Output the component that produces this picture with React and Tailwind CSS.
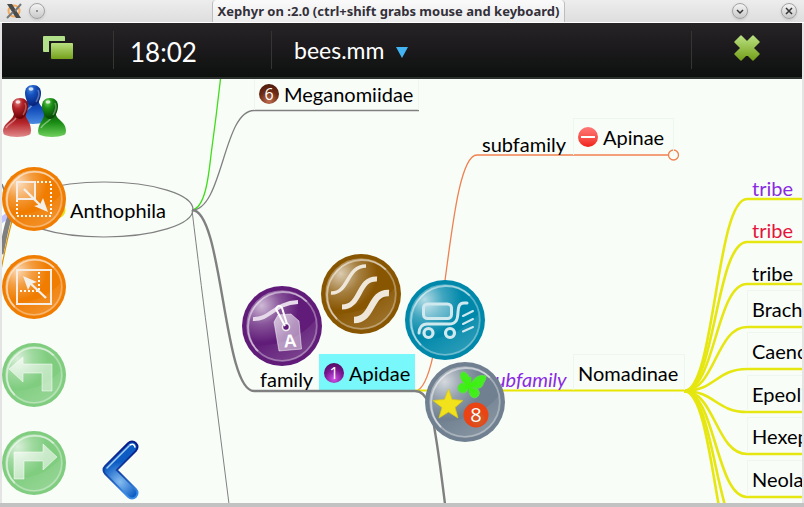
import React from "react";

/* Glossy round badge used by the side bar and the radial menu. */
function Disc({ id, size, color, children }) {
  const c = size / 2;
  return (
    <svg viewBox={`0 0 ${size} ${size}`} className="block size-full" aria-hidden="true">
      <defs>
        <radialGradient id={`${id}-shine`} cx="0.2" cy="0.2" r="0.55">
          <stop offset="0" stopColor="#fff" stopOpacity="0.7" />
          <stop offset="0.5" stopColor="#fff" stopOpacity="0.25" />
          <stop offset="1" stopColor="#fff" stopOpacity="0" />
        </radialGradient>
        <linearGradient id={`${id}-low`} x1="0" y1="0" x2="1" y2="1">
          <stop offset="0.3" stopColor="#fff" stopOpacity="0" />
          <stop offset="1" stopColor="#fff" stopOpacity="0.22" />
        </linearGradient>
        <linearGradient id={`${id}-ink`} x1="0" y1="0" x2="1" y2="1">
          <stop offset="0" stopColor="#fff" />
          <stop offset="1" stopColor="#fff" stopOpacity="0.65" />
        </linearGradient>
      </defs>
      <circle cx={c} cy={c} r={c} fill={color} />
      <circle cx={c} cy={c} r={c * 0.85} fill={`url(#${id}-shine)`} />
      <path
        d={`M${c * 0.3} ${c * 1.5} Q${c * 1.3} ${c * 1.5} ${c * 1.84} ${c * 0.85} A${c * 0.85} ${c * 0.85} 0 0 1 ${c * 0.3} ${c * 1.5}Z`}
        fill={`url(#${id}-low)`}
      />
      <circle cx={c} cy={c} r={c * 0.87} fill="none" stroke="#fff" strokeOpacity="0.35" strokeWidth="1.8" />
      <path
        d={`M${c * 0.4} ${c * 1.63} A${c * 0.87} ${c * 0.87} 0 0 1 ${c * 1.62} ${c * 0.39}`}
        fill="none"
        stroke="#fff"
        strokeOpacity="0.5"
        strokeWidth="1.8"
      />
      {children}
    </svg>
  );
}

function Person({ x, y, lean, id, light, mid, dark }) {
  return (
    <g transform={`translate(${x} ${y})`}>
      <defs>
        <radialGradient id={`${id}-head`} cx="0.35" cy="0.2" r="0.75">
          <stop offset="0" stopColor={light} />
          <stop offset="0.4" stopColor={mid} />
          <stop offset="1" stopColor={dark} />
        </radialGradient>
        <linearGradient id={`${id}-body`} x1="0" y1="0" x2="0" y2="1">
          <stop offset="0" stopColor={dark} />
          <stop offset="0.45" stopColor={mid} />
          <stop offset="1" stopColor={light} />
        </linearGradient>
      </defs>
      <path
        d={`M${lean - 6} 13 H${lean + 6} C${lean + 4} 22 14 22 14 33 Q14 36 12 37 C6 39.500 -6 39.500 -12 37 Q-14 36 -14 33 C-13 23 ${lean - 5} 23 ${lean - 6} 13Z`}
        fill={`url(#${id}-body)`}
      />
      <path d="M-11 30 C-9 25 -4 25 -1 20" fill="none" stroke="#fff" strokeOpacity="0.4" strokeWidth="1.5" />
      <g transform={`translate(${lean} 0)`}>
        <path d="M0 0 C5 0 8 3 8 8 C8 13 5 21 0 21 C-5 21 -8 13 -8 8 C-8 3 -5 0 0 0Z" fill={`url(#${id}-head)`} />
        <ellipse cx="-2" cy="4" rx="2.500" ry="1.800" fill="#fff" fillOpacity="0.75" />
        <path d="M5 5 C7 9 5 14 3 17" fill="none" stroke="#fff" strokeOpacity="0.3" strokeWidth="1.500" />
      </g>
    </g>
  );
}

function PeopleIcon() {
  return (
    <svg viewBox="0 0 64 64" className="block size-full" aria-hidden="true">
      <Person id="blue" x={31} y={6} lean={0} light="#4a8be0" mid="#1550bd" dark="#08257f" />
      <Person id="red" x={15} y={19} lean={3} light="#e08a8a" mid="#b5252a" dark="#6d0408" />
      <Person id="green" x={50} y={19} lean={-2} light="#6fd05c" mid="#1a8d15" dark="#064a06" />
    </svg>
  );
}

function ExpandIcon() {
  return (
    <Disc id="expand" size={64} color="#f07c00">
      <rect x="15" y="15" width="34" height="34" fill="none" stroke="#fff" strokeOpacity="0.95" strokeWidth="2" strokeDasharray="2 2" />
      <rect x="15" y="15" width="18" height="17" fill="#fff" fillOpacity="0.2" stroke="#f6ece2" strokeWidth="2" />
      <path d="M22 22 L40 40" stroke="#f3efe9" strokeWidth="2.4" />
      <path d="M46 45 L32 39 L38 37.500 L41 31Z" fill="#f3efe9" />
    </Disc>
  );
}

function ShrinkIcon() {
  return (
    <Disc id="shrink" size={64} color="#f07c00">
      <rect x="15" y="15" width="34" height="34" fill="none" stroke="#f6ece2" strokeWidth="2" />
      <path d="M37 17 V36 H16" fill="none" stroke="#fff" strokeOpacity="0.95" strokeWidth="2" strokeDasharray="2 2" />
      <path d="M44 43 L27 27" stroke="#f3efe9" strokeWidth="2.4" />
      <path d="M21 21 L35 27 L29 29 L26 35Z" fill="#f3efe9" />
    </Disc>
  );
}

function UndoIcon() {
  return (
    <Disc id="undo" size={64} color="#80cd80">
      <path d="M7 26 L21 14 V21 H50 V48 H40 V30 H21 V39Z" fill="url(#undo-ink)" fillOpacity="0.65" stroke="#fff" strokeOpacity="0.5" strokeWidth="1" />
    </Disc>
  );
}

function RedoIcon() {
  return (
    <Disc id="redo" size={64} color="#80cd80">
      <path d="M55 26 L41 13 V21 H12 V48 H22 V30 H41 V39Z" fill="url(#redo-ink)" fillOpacity="0.7" stroke="#fff" strokeOpacity="0.5" strokeWidth="1" />
    </Disc>
  );
}

function TagIcon() {
  return (
    <Disc id="tag" size={80} color="#601c78">
      <path d="M11 33 C28 34 32 17 56 16" fill="none" stroke="#e6d9ea" strokeWidth="4" />
      <path d="M32 36 L36 29 L49 28 L57 35 L59.500 63 L37 65Z" fill="url(#tag-ink)" fillOpacity="0.65" stroke="#fff" strokeOpacity="0.5" strokeWidth="1" />
      <circle cx="44" cy="41" r="3.500" fill="#601c78" stroke="#eee" strokeWidth="1.600" />
      <path d="M43 40 L34 23 Q37 17 40 22 L45 38" fill="none" stroke="#fff" strokeWidth="2" />
      <text x="48" y="61" fontSize="18" fontWeight="700" textAnchor="middle" fill="#fff" transform="rotate(-4 48 55)" className="font-['Liberation_Sans',sans-serif]">A</text>
    </Disc>
  );
}

function WavesIcon() {
  return (
    <Disc id="waves" size={80} color="#885500">
      <g fill="none" stroke="#eee7da">
        <path d="M10 39 C28 40 25 12 45 12" strokeWidth="3.500" />
        <path d="M21 53 C41 53 36 24 56 25" strokeWidth="5" />
        <path d="M33 66 C53 66 48 38 68 39" strokeWidth="6.500" />
      </g>
    </Disc>
  );
}

function CartIcon() {
  return (
    <Disc id="cart" size={80} color="#0088aa">
      <g fill="none" stroke="#d0e9ef" strokeLinecap="round">
        <rect x="18.500" y="24" width="28" height="14.500" rx="4" strokeWidth="3" fill="url(#cart-ink)" fillOpacity="0.35" />
        <path d="M62 23 H59 C50 23 55 36 51 41 Q49 44 44 44 H22 C17 44 14 48 14 53" strokeWidth="3" />
        <circle cx="23.500" cy="53" r="4.500" strokeWidth="3.200" />
        <circle cx="45" cy="53" r="4.500" strokeWidth="3.200" />
        <path d="M58 36 L68 31 M58 44 L68 39 M58 51.500 L68 47" strokeWidth="2" />
      </g>
    </Disc>
  );
}

function BadgesIcon() {
  return (
    <Disc id="badges" size={80} color="#708090">
      <path d="M23.500 27 L27 37.500 L38 38.500 L30 45.500 L33 56 L23.500 50 L14 56 L17 45.500 L8 38.500 L19.500 37.500Z" fill="#f2e21c" stroke="#dccb10" strokeWidth="0.800" />
      <g fill="#42ef1c" stroke="#62d850" strokeWidth="1">
        <path d="M44 24 C37 21 33 14 37 10 C41 9 46 15 46 23Z" />
        <path d="M46 23 C48 16 54 12 61 14 C61 18 59 20 58 22 C58 26 52 27 48 26Z" />
        <circle cx="38" cy="26" r="5" />
        <circle cx="49.500" cy="31" r="4.800" />
        <path d="M45 15 L45 31" stroke="#3cf010" strokeWidth="2.500" />
        <path d="M40 26 L52 21 M38 17 L49 30" stroke="#3cf010" strokeWidth="3" />
      </g>
      <circle cx="51" cy="53" r="12.500" fill="#ea4414" />
      <circle cx="53" cy="57" r="7" fill="#c86030" fillOpacity="0.500" />
      <text x="51" y="60" fontSize="20" textAnchor="middle" fill="#fff" className="font-['Open_Sans',sans-serif]">8</text>
    </Disc>
  );
}

function ChevronIcon() {
  return (
    <svg viewBox="0 0 40 62" className="block size-full" aria-hidden="true">
      <defs>
        <linearGradient id="chev-edge" x1="0" y1="0" x2="0" y2="1">
          <stop offset="0" stopColor="#0a1a86" />
          <stop offset="0.55" stopColor="#1242a5" />
          <stop offset="1" stopColor="#3a8ae6" />
        </linearGradient>
        <radialGradient id="chev-fill" gradientUnits="userSpaceOnUse" cx="20" cy="43" r="20">
          <stop offset="0" stopColor="#86bdf0" />
          <stop offset="1" stopColor="#0c5cc4" />
        </radialGradient>
      </defs>
      <g fill="none" strokeLinecap="round" strokeLinejoin="round">
        <path d="M32 8 L9 31 L32 54" stroke="url(#chev-edge)" strokeWidth="13" />
        <path d="M32 8 L9 31 L32 54" stroke="url(#chev-fill)" strokeWidth="9" />
        <path d="M29 7 L7 29" stroke="#a9d0f5" strokeWidth="1.500" />
        <path d="M30 6 Q34 4 35 8" stroke="#fff" strokeWidth="1.500" />
      </g>
    </svg>
  );
}

const rows = [199, 242, 284, 327, 369, 412, 454, 497, 540, 582];

function Branches() {
  return (
    <svg viewBox="2 79 800 424" className="absolute top-0 left-0 h-[424px] w-[800px] overflow-visible" fill="none" aria-hidden="true">
      <path d="M0 221 L16 210" stroke="#c3c4ff" strokeWidth="6" />
      <path d="M15 208 C8 202 5 194 2 184" stroke="#808080" strokeWidth="1.500" />
      <path d="M16 209 C8 214 6 230 1 254" stroke="#808080" strokeWidth="5" />
      <path d="M15 211 C10 225 6 245 1 270" stroke="#dc9400" strokeWidth="1.200" />
      <ellipse cx="104" cy="209.500" rx="89" ry="27.500" stroke="#808080" strokeWidth="1.200" />
      <circle cx="57" cy="210" r="8.500" fill="#e8e010" />
      <path d="M192 210 C206 208 209 172 211 155 C214 133 217 110 220.500 79" stroke="#3fdd1a" strokeWidth="1.300" />
      <path d="M192 210 C223 210 223 110.500 254 110.500 H419" stroke="#808080" strokeWidth="1.300" />
      <path d="M192 210 C195 235 203 300 207 330 L229 504" stroke="#808080" strokeWidth="1" />
      <path d="M415 391 C446 391 446 155 477 155 H668" stroke="#f08050" strokeWidth="1.300" />
      <circle cx="673.500" cy="155" r="5" fill="#f8fdf8" stroke="#f08050" strokeWidth="1.300" />
      <path d="M415 390.500 H686" stroke="#e6e600" strokeWidth="2" />
      <path d="M192 210 C223 210 223 391 254 391 H415 C429 391 432 413 435 432 C439 455 442 480 445 504" stroke="#808080" strokeWidth="2.400" />
      {rows.map((y) => (
        <path key={y} d={`M684 391 C715 391 716 ${y} 747 ${y} H804`} stroke="#e6e610" strokeWidth="2.600" />
      ))}
    </svg>
  );
}

function Ball({ className, children }) {
  return (
    <span className={`flex size-5 shrink-0 items-center justify-center rounded-full font-['Open_Sans',sans-serif] text-base leading-5 text-white ${className}`}>
      {children}
    </span>
  );
}

function Node({ className, icon, children }) {
  return (
    <div className={`absolute flex items-center gap-[5px] border pl-1 whitespace-nowrap ${className}`}>
      {icon}
      <span>{children}</span>
    </div>
  );
}

function Label({ className, children }) {
  return <span className={`absolute whitespace-nowrap ${className}`}>{children}</span>;
}

function RoundButton({ label, className, children }) {
  return (
    <button type="button" aria-label={label} className={`rounded-full ${className}`}>
      {children}
    </button>
  );
}

function TitleBar() {
  const knob = "flex size-4 items-center justify-center rounded-full border border-[#a2a2a2] bg-gradient-to-b from-[#f4f4f4] to-[#c9c9c9] shadow-sm";
  return (
    <header className="flex h-[23px] shrink-0 border-b border-white bg-gradient-to-b from-[#ededed] to-[#dedede]">
      <div className="flex w-[212px] shrink-0 items-center gap-[7px] pl-[6px]">
        <svg viewBox="0 0 16 16" className="size-4" aria-hidden="true">
          <circle cx="8" cy="8" r="5.500" fill="none" stroke="#f5a85a" strokeWidth="2" />
          <path d="M1 1 H6 L15 15 H10Z" fill="#4a4a4a" />
          <path d="M15 1 L9 8 M7 9 L1 15" stroke="#777" strokeWidth="2" />
        </svg>
        <button type="button" aria-label="Window menu" className={knob}>
          <span className="size-[2px] rounded-full bg-[#777]" />
        </button>
      </div>
      <h1 className="flex-1 rounded-t-sm border-x border-[#bdbdbd] bg-gradient-to-b from-[#fafafa] to-[#ececec] text-center font-['Noto_Sans',sans-serif] text-[13px] leading-[22px] font-bold whitespace-nowrap text-[#33303a]">
        Xephyr on :2.0 (ctrl+shift grabs mouse and keyboard)
      </h1>
      <div className="flex w-[239px] shrink-0 items-center justify-end gap-[33px] pr-[7px]">
        <button type="button" aria-label="Minimize" className={knob}>
          <svg viewBox="0 0 10 10" className="size-[10px]" fill="none" stroke="#333" strokeWidth="1.500" aria-hidden="true"><path d="M2 4 L5 7 L8 4" /></svg>
        </button>
        <button type="button" aria-label="Close window" className={knob}>
          <svg viewBox="0 0 10 10" className="size-[10px]" fill="none" stroke="#333" strokeWidth="1.500" aria-hidden="true"><path d="M2 2 L8 8 M8 2 L2 8" /></svg>
        </button>
      </div>
    </header>
  );
}

function ToolBar() {
  return (
    <nav className="flex h-14 shrink-0 items-stretch border-b-2 border-[#2c302e] bg-gradient-to-b from-[#272426] via-[#1b191c] to-[#0d110e] text-white">
      <button type="button" aria-label="Task switcher" className="flex w-[111px] items-center justify-center pb-1">
        <svg viewBox="0 0 32 26" className="h-[26px] w-8" aria-hidden="true">
          <defs>
            <linearGradient id="leaf" x1="0" y1="0" x2="0" y2="1">
              <stop offset="0" stopColor="#b9e080" />
              <stop offset="1" stopColor="#74a01a" />
            </linearGradient>
          </defs>
          <rect x="1" y="1" width="22" height="16" rx="1" fill="#b2e08a" />
          <rect x="7" y="6" width="24" height="19" fill="#1c1a1d" />
          <rect x="9" y="8" width="22" height="16" rx="1" fill="url(#leaf)" />
        </svg>
      </button>
      <div className="my-2 w-px bg-[#343634]" />
      <time className="w-[157px] pt-1 pl-4 text-[26px] leading-[50px]">18:02</time>
      <div className="my-2 w-px bg-[#343634]" />
      <button type="button" className="flex flex-1 items-center gap-3 pl-[22px] text-[23px]">
        bees.mm
        <svg viewBox="0 0 12 11" className="mt-1 h-[11px] w-3" aria-hidden="true">
          <path d="M0 0 H12 L6 11Z" fill="#43b4f2" />
        </svg>
      </button>
      <div className="my-2 w-px bg-[#343634]" />
      <button type="button" aria-label="Close" className="flex w-[110px] items-center justify-center pb-1">
        <svg viewBox="0 0 26 26" className="size-[26px]" aria-hidden="true">
          <path d="M7 1 L13 7 L19 1 L25 7 L19 13 L25 19 L19 25 L13 19 L7 25 L1 19 L7 13 L1 7Z" fill="url(#leaf)" stroke="url(#leaf)" strokeWidth="1.500" strokeLinejoin="round" />
        </svg>
      </button>
    </nav>
  );
}

export default function App() {
  return (
    <div className="flex min-h-screen flex-col bg-[#e4e4e4] font-['Lato','Noto_Sans',sans-serif]">
      <TitleBar />
      <div className="mx-[2px] flex flex-1 flex-col">
        <ToolBar />
        <main className="relative flex-1 overflow-hidden bg-[#f8fdf8] text-xl leading-6 text-black">
          <Node className="top-[275px] left-[317px] h-[37px] w-24 border-[#78f8fa] bg-[#78f8fa]" icon={<Ball className="bg-[radial-gradient(circle_at_50%_80%,#d050e8,#7a1590_50%,#40064e)]">1</Ball>}>Apidae</Node>
          <Branches />
          <Label className="top-[119px] left-[68px]">Anthophila</Label>
          <Node className="-top-[3px] left-[252px] h-[34px] w-[165px] border-b-0 border-[#eff5ef]" icon={<Ball className="bg-[radial-gradient(circle_at_50%_85%,#c07050,#6e2b14_50%,#42150a)]">6</Ball>}>Meganomiidae</Node>
          <Label className="top-[53px] left-[480px]">subfamily</Label>
          <Node
            className="top-[39px] left-[571px] h-[37px] w-[101px] border-b-0 border-[#eff5ef]"
            icon={
              <span className="flex size-5 shrink-0 items-center justify-center rounded-full bg-gradient-to-b from-[#f77] to-[#f01c14]">
                <span className="h-[2px] w-[14px] bg-white" />
              </span>
            }
          >
            Apinae
          </Node>
          <Label className="top-[288px] left-[258px]">family</Label>
          <Label className="top-[288px] left-[485px] text-[#8a2be2] italic">subfamily</Label>
          <Node className="top-[275px] left-[571px] h-9 w-[112px] border-b-0 border-[#eff5ef]">Nomadinae</Node>
          <Label className="top-[97px] left-[750px] text-[#8a2be2]">tribe</Label>
          <Label className="top-[139px] left-[750px] text-[#e6143c]">tribe</Label>
          <Label className="top-[182px] left-[750px]">tribe</Label>
          <Node className="top-[211px] left-[745px] h-9 w-24 border-b-0 border-[#eff5ef]">Brach</Node>
          <Node className="top-[253px] left-[745px] h-9 w-24 border-b-0 border-[#eff5ef]">Caeno</Node>
          <Node className="top-[296px] left-[745px] h-9 w-24 border-b-0 border-[#eff5ef]">Epeoli</Node>
          <Node className="top-[338px] left-[745px] h-9 w-24 border-b-0 border-[#eff5ef]">Hexep</Node>
          <Node className="top-[381px] left-[745px] h-9 w-24 border-b-0 border-[#eff5ef]">Neola</Node>

          <aside className="absolute top-0 left-0 flex flex-col gap-6">
            <RoundButton label="People" className="size-16"><PeopleIcon /></RoundButton>
            <RoundButton label="Expand" className="size-16"><ExpandIcon /></RoundButton>
            <RoundButton label="Shrink" className="size-16"><ShrinkIcon /></RoundButton>
            <RoundButton label="Undo" className="size-16"><UndoIcon /></RoundButton>
            <RoundButton label="Redo" className="size-16"><RedoIcon /></RoundButton>
          </aside>
          <button type="button" aria-label="Back" className="absolute top-[360px] left-[98px] h-[62px] w-10"><ChevronIcon /></button>

          <RoundButton label="Edit tag" className="absolute top-[207px] left-[240px] size-20"><TagIcon /></RoundButton>
          <RoundButton label="Line style" className="absolute top-[175px] left-[319px] size-20"><WavesIcon /></RoundButton>
          <RoundButton label="Move node" className="absolute top-[201px] left-[403px] size-20"><CartIcon /></RoundButton>
          <RoundButton label="Icons" className="absolute top-[283px] left-[423px] size-20"><BadgesIcon /></RoundButton>
        </main>
      </div>
      <footer className="h-1 shrink-0 bg-[#c2c2c2]" />
    </div>
  );
}
